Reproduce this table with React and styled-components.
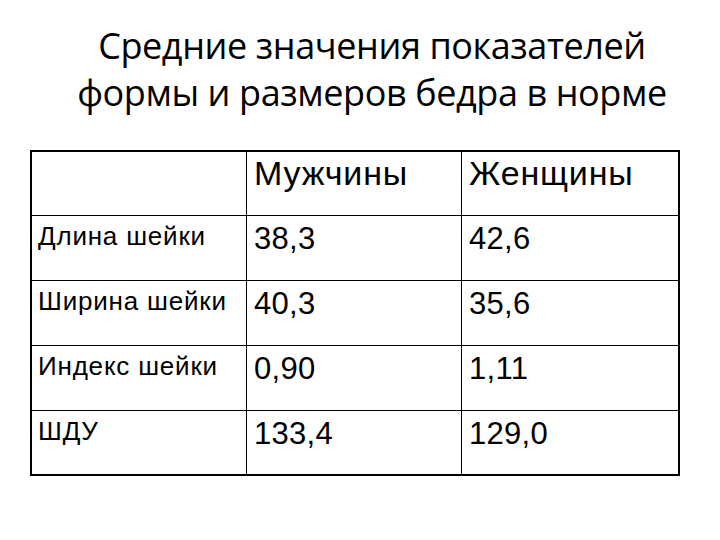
import styled, { createGlobalStyle } from "styled-components";

const GlobalStyle = createGlobalStyle`
  html, body {
    margin: 0;
    padding: 0;
    background: #ffffff;
  }
`;

const Slide = styled.div`
  width: 720px;
  height: 540px;
  background: #ffffff;
  color: #000000;
  display: flex;
  flex-direction: column;
  overflow: hidden;
`;

const Title = styled.h1`
  margin: 0;
  padding: 22px 0 0 24px;
  height: 150px;
  box-sizing: border-box;
  font-family: "Open Sans", "Noto Sans", sans-serif;
  font-weight: 400;
  font-size: 36px;
  line-height: 47px;
  letter-spacing: -0.4px;
  text-align: center;
`;

const Table = styled.div`
  margin-left: 30px;
  width: 650px;
  height: 326px;
  box-sizing: border-box;
  border: 2px solid #000000;
  display: grid;
  grid-template-columns: 215px 215px 1fr;
  grid-template-rows: 64px 65px 65px 65px 1fr;
`;

const sizes = {
  head: { font: "34px", spacing: "0.8px", pad: "2px 0 0 7px" },
  label: { font: "26px", spacing: "0.8px", pad: "6px 0 0 6px" },
  value: { font: "31px", spacing: "0.3px", pad: "5px 0 0 7px" },
};

const Cell = styled.div`
  box-sizing: border-box;
  border-right: ${({ $lastCol }) => ($lastCol ? "none" : "1px solid #000")};
  border-bottom: ${({ $lastRow }) => ($lastRow ? "none" : "1px solid #000")};
  padding: ${({ $kind }) => sizes[$kind].pad};
  font-family: "Liberation Sans", Arial, sans-serif;
  font-size: ${({ $kind }) => sizes[$kind].font};
  letter-spacing: ${({ $kind }) => sizes[$kind].spacing};
  line-height: 1.15;
  white-space: nowrap;
`;

const header = ["", "Мужчины", "Женщины"];
const rows = [
  ["Длина шейки", "38,3", "42,6"],
  ["Ширина шейки", "40,3", "35,6"],
  ["Индекс шейки", "0,90", "1,11"],
  ["ШДУ", "133,4", "129,0"],
];

export default function App() {
  const all = [header, ...rows];
  return (
    <>
      <GlobalStyle />
      <Slide>
        <Title>
          Средние значения показателей
          <br />
          формы и размеров бедра в норме
        </Title>
        <Table>
          {all.map((row, r) =>
            row.map((text, c) => (
              <Cell
                key={`${r}-${c}`}
                $kind={r === 0 ? "head" : c === 0 ? "label" : "value"}
                $lastCol={c === 2}
                $lastRow={r === all.length - 1}
              >
                {text}
              </Cell>
            ))
          )}
        </Table>
      </Slide>
    </>
  );
}
